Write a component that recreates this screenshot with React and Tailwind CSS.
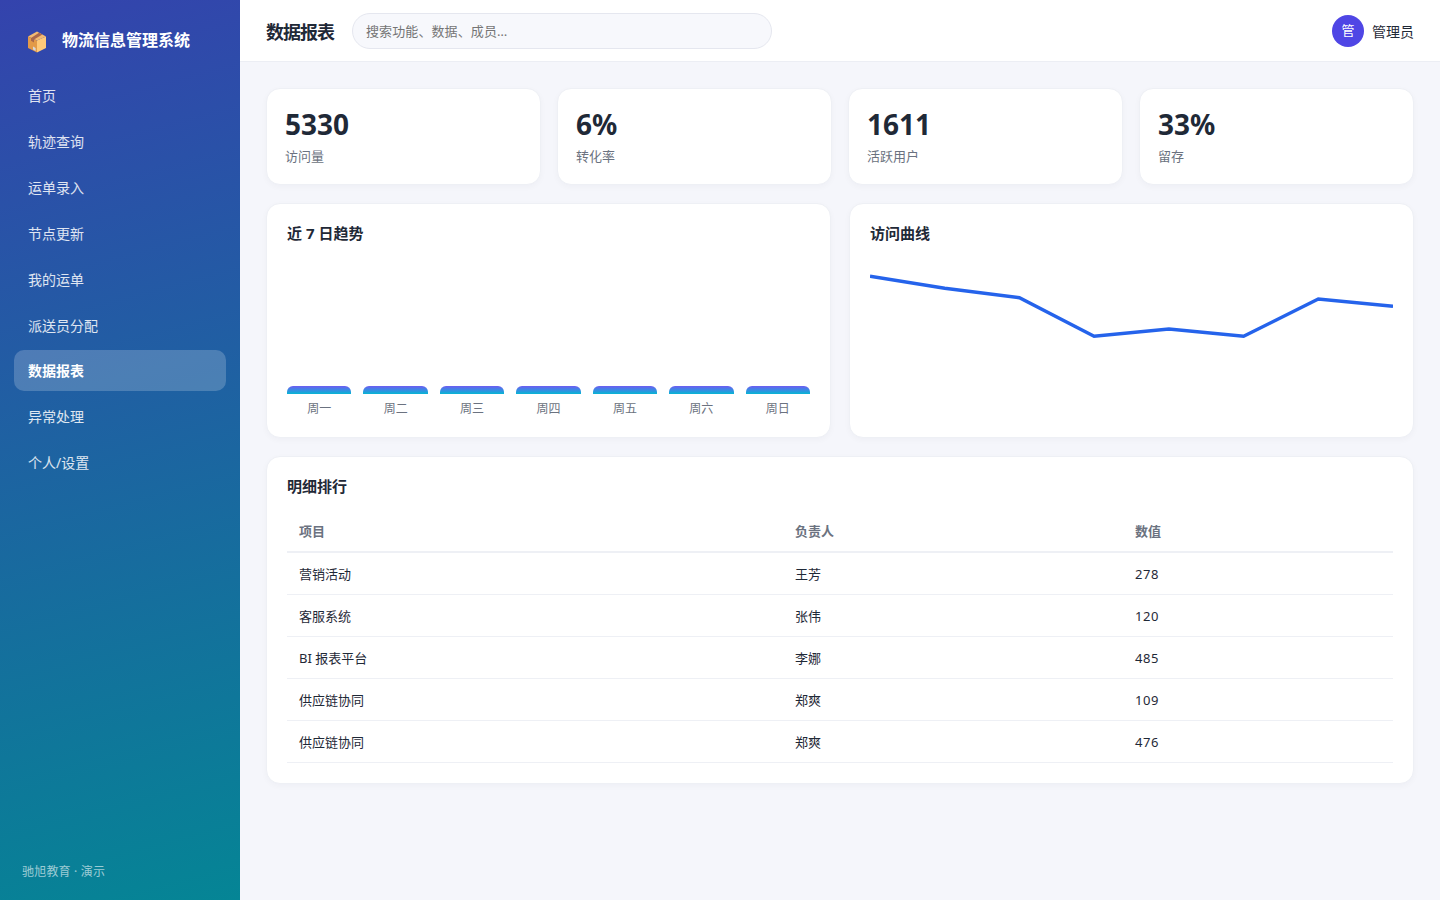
const navItems = [
	"首页",
	"轨迹查询",
	"运单录入",
	"节点更新",
	"我的运单",
	"派送员分配",
	"数据报表",
	"异常处理",
	"个人/设置",
];

const stats = [
	{ value: "5330", label: "访问量" },
	{ value: "6%", label: "转化率" },
	{ value: "1611", label: "活跃用户" },
	{ value: "33%", label: "留存" },
];

const days = ["周一", "周二", "周三", "周四", "周五", "周六", "周日"];

const rows = [
	{ name: "营销活动", owner: "王芳", value: 278 },
	{ name: "客服系统", owner: "张伟", value: 120 },
	{ name: "BI 报表平台", owner: "李娜", value: 485 },
	{ name: "供应链协同", owner: "郑爽", value: 109 },
	{ name: "供应链协同", owner: "郑爽", value: 476 },
];

const BoxLogo = () => (
	<svg width="20" height="22" viewBox="0 0 20 22" className="mt-1 shrink-0">
		<path d="M1 5.5 10 0.5 19 5.5 10 9.5Z" fill="#f3ba72" />
		<path d="M1 5.5 10 9.5V21.5L1 17Z" fill="#e39a48" />
		<path d="M19 5.5 10 9.5V21.5L19 17Z" fill="#ffca7a" />
		<path d="M4 7 12 1.8 15.4 3.6 7 8.4V11.4L4 9.8Z" fill="#a8674c" />
		<path d="M6 15.5 8.6 17V20L6 18.5Z" fill="#d5d8dc" />
	</svg>
);

const Sidebar = () => (
	<aside className="flex w-60 shrink-0 flex-col bg-[linear-gradient(165deg,#3443ad,#058595)] px-3.5 pt-[26px] pb-[18px] text-white">
		<div className="mb-[21px] flex h-7 items-center gap-[15px] pl-[13px]">
			<BoxLogo />
			<span className="text-[16px] font-bold">物流信息管理系统</span>
		</div>
		<nav className="flex flex-1 flex-col gap-[5px]">
			{navItems.map((item) => (
				<a
					key={item}
					className={
						item === "数据报表"
							? "flex h-[40.85px] items-center rounded-[10px] bg-white/20 px-3.5 pt-0.5 text-sm font-bold"
							: "flex h-[40.85px] items-center rounded-[10px] px-3.5 pt-0.5 text-sm text-white/85"
					}
				>
					{item}
				</a>
			))}
		</nav>
		<div className="pl-2 text-xs leading-5 tracking-[0.2px] text-white/60">驰旭教育 · 演示</div>
	</aside>
);

const Header = () => (
	<header className="flex h-[62px] shrink-0 items-center border-b border-[#eceef4] bg-white px-[26px]">
		<h1 className="w-[68px] pt-0.5 text-[18px] leading-6 font-bold tracking-[-1px] whitespace-nowrap">数据报表</h1>
		<input
			type="text"
			placeholder="搜索功能、数据、成员…"
			className="ml-[18px] h-9 w-[420px] rounded-full border border-[#e5e7ef] bg-[#f7f8fc] px-[13px] text-[13px] tracking-[0.1px] placeholder:text-[#757575] focus:outline-none"
		/>
		<div className="ml-auto flex items-center gap-2 text-sm">
			<div className="flex h-8 w-8 items-center justify-center rounded-full bg-[#4f46e5] text-[13px] text-white">管</div>
			<span className="pt-0.5">管理员</span>
		</div>
	</header>
);

const Card = ({ title, className = "", children }) => (
	<section
		className={`rounded-[14px] border border-[#eef0f5] bg-white px-5 pt-[19px] pb-5 shadow-[0_2px_6px_rgba(30,41,59,0.03)] ${className}`}
	>
		<h2 className="text-[15px] leading-5 font-bold">{title}</h2>
		{children}
	</section>
);

const BarChart = () => (
	<div className="mt-3.5 flex h-[160px] items-end gap-3">
		{days.map((day) => (
			<div key={day} className="flex flex-1 flex-col items-center gap-[7px]">
				<div className="h-2 w-full rounded-t-md bg-[linear-gradient(180deg,#6d5df2,#06b6d4)]" />
				<span className="text-xs leading-4 text-[#6b7280]">{day}</span>
			</div>
		))}
	</div>
);

const LineChart = () => (
	<svg viewBox="0 0 523 160" className="mt-3.5 block h-[160px] w-full">
		<polyline
			points="0,19.3 74.7,31.3 149.4,40.7 224.1,79.3 298.9,72 373.6,79.3 448.3,42 523,49.3"
			fill="none"
			stroke="#2563eb"
			strokeWidth="3.4"
		/>
	</svg>
);

const RankTable = () => (
	<table className="mt-[15px] w-full table-fixed border-separate border-spacing-0 text-left text-[13px]">
		<colgroup>
			<col className="w-[496px]" />
			<col className="w-[340px]" />
			<col />
		</colgroup>
		<thead>
			<tr className="text-[#6b7280]">
				{["项目", "负责人", "数值"].map((head) => (
					<th key={head} className="h-[42px] border-b-2 border-[#eef0f5] px-3 pt-0.5 pb-0 font-bold">
						{head}
					</th>
				))}
			</tr>
		</thead>
		<tbody>
			{rows.map((row, i) => (
				<tr key={i}>
					<td className="h-[42px] border-b border-[#eef0f5] px-3 pt-0.5 pb-0">{row.name}</td>
					<td className="h-[42px] border-b border-[#eef0f5] px-3 pt-0.5 pb-0">{row.owner}</td>
					<td className="h-[42px] border-b border-[#eef0f5] px-3 pt-0.5 pb-0 tracking-[0.6px]">{row.value}</td>
				</tr>
			))}
		</tbody>
	</table>
);

export default function App() {
	return (
		<div className="flex h-screen overflow-hidden bg-[#f5f6fb] font-['Noto_Sans','Noto_Sans_CJK_SC',sans-serif] text-[#1f2937]">
			<Sidebar />
			<div className="flex min-w-0 flex-1 flex-col">
				<Header />
				<main className="p-[26px]">
					<div className="grid grid-cols-4 gap-4">
						{stats.map((stat) => (
							<div
								key={stat.label}
								className="h-[97px] rounded-[14px] border border-[#eef0f5] bg-white px-[18px] pt-[17px] shadow-[0_2px_6px_rgba(30,41,59,0.03)]"
							>
								<div className="text-[28px] leading-9 font-bold">{stat.value}</div>
								<div className="mt-1 text-[13px] leading-5 text-[#6b7280]">{stat.label}</div>
							</div>
						))}
					</div>
					<div className="mt-[18px] grid grid-cols-2 gap-[18px]">
						<Card title="近 7 日趋势" className="h-[235px]">
							<BarChart />
						</Card>
						<Card title="访问曲线" className="h-[235px]">
							<LineChart />
						</Card>
					</div>
					<Card title="明细排行" className="mt-[18px] h-[328px]">
						<RankTable />
					</Card>
				</main>
			</div>
		</div>
	);
}
